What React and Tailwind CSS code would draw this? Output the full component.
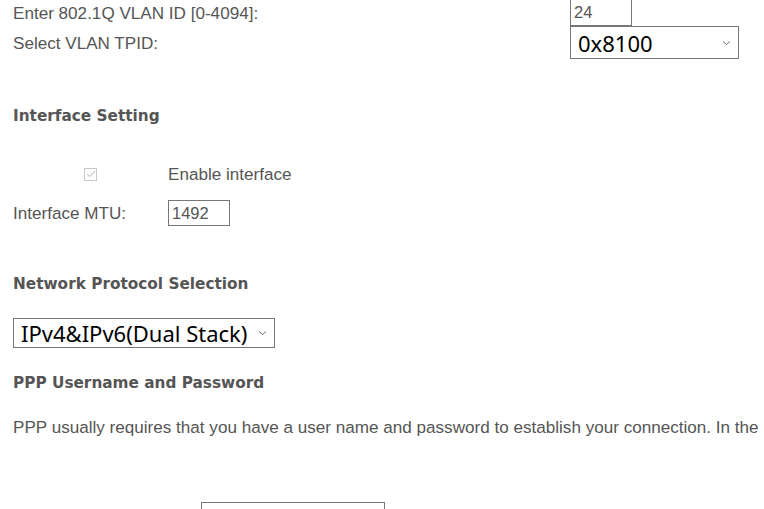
import React from "react";

function Chevron() {
  return (
    <svg width="9" height="6" viewBox="0 0 9 6" className="shrink-0">
      <path d="M1 1.5 L4.5 4.5 L8 1.5" fill="none" stroke="#6b6b6b" strokeWidth="1" />
    </svg>
  );
}

function FakeSelect({ value, className }) {
  return (
    <div
      className={`flex items-center justify-between border border-[#767676] bg-white pl-[7px] pr-[7px] text-black ${className}`}
      style={{ fontFamily: '"Noto Sans", "Open Sans", sans-serif' }}
    >
      <span className="leading-none">{value}</span>
      <Chevron />
    </div>
  );
}

function TextBox({ value, className }) {
  return (
    <div className={`flex items-center border border-[#767676] bg-white px-[3px] text-[16.5px] text-[#555] ${className}`}>
      {value}
    </div>
  );
}

const heading = { fontFamily: '"DejaVu Sans", Verdana, sans-serif' };

export default function App() {
  return (
    <div
      className="h-[509px] w-[764px] overflow-hidden bg-white pl-[13px] text-[17.1px] text-[#555]"
      style={{ fontFamily: '"Liberation Sans", Arial, sans-serif' }}
    >
      <div className="mt-[-2px] flex h-[28px] items-center">
        <div className="w-[557px] pt-[3px]">Enter 802.1Q VLAN ID [0-4094]:</div>
        <TextBox value="24" className="h-[28px] w-[62px]" />
      </div>

      <div className="flex h-[33px] items-center">
        <div className="w-[557px] pt-[2px]">Select VLAN TPID:</div>
        <FakeSelect value="0x8100" className="h-[33px] w-[169px] text-[22px]" />
      </div>

      <div className="mt-[45px] flex h-[24px] items-center text-[15.3px] font-bold" style={heading}>
        Interface Setting
      </div>

      <div className="mt-[34px] flex h-[24px] items-center">
        <div className="flex w-[155px] justify-center">
          <span className="flex h-[13px] w-[13px] items-center justify-center border border-[#c8c8c8] bg-white">
            <svg width="10" height="8" viewBox="0 0 10 8">
              <path d="M1 4 L3.8 6.6 L9 1" fill="none" stroke="#b5b5b5" strokeWidth="1" />
            </svg>
          </span>
        </div>
        <div className="pt-[2px]">Enable interface</div>
      </div>

      <div className="mt-[14px] flex h-[26px] items-center">
        <div className="w-[155px] pt-[1px]">Interface MTU:</div>
        <TextBox value="1492" className="h-[26px] w-[62px]" />
      </div>

      <div className="mt-[46px] flex h-[24px] items-center text-[15.3px] font-bold" style={heading}>
        Network Protocol Selection
      </div>

      <div className="mt-[22px] flex">
        <FakeSelect value="IPv4&IPv6(Dual Stack)" className="h-[30px] w-[262px] text-[22px]" />
      </div>

      <div className="mt-[23px] flex h-[24px] items-center text-[15.3px] font-bold" style={heading}>
        PPP Username and Password
      </div>

      <div className="mt-[20px] flex h-[24px] items-center whitespace-nowrap pt-[1px]">
        PPP usually requires that you have a user name and password to establish your connection. In the
      </div>

      <div className="mt-[63px] flex pl-[188px]">
        <div className="h-[26px] w-[184px] border border-[#767676] bg-white" />
      </div>
    </div>
  );
}
